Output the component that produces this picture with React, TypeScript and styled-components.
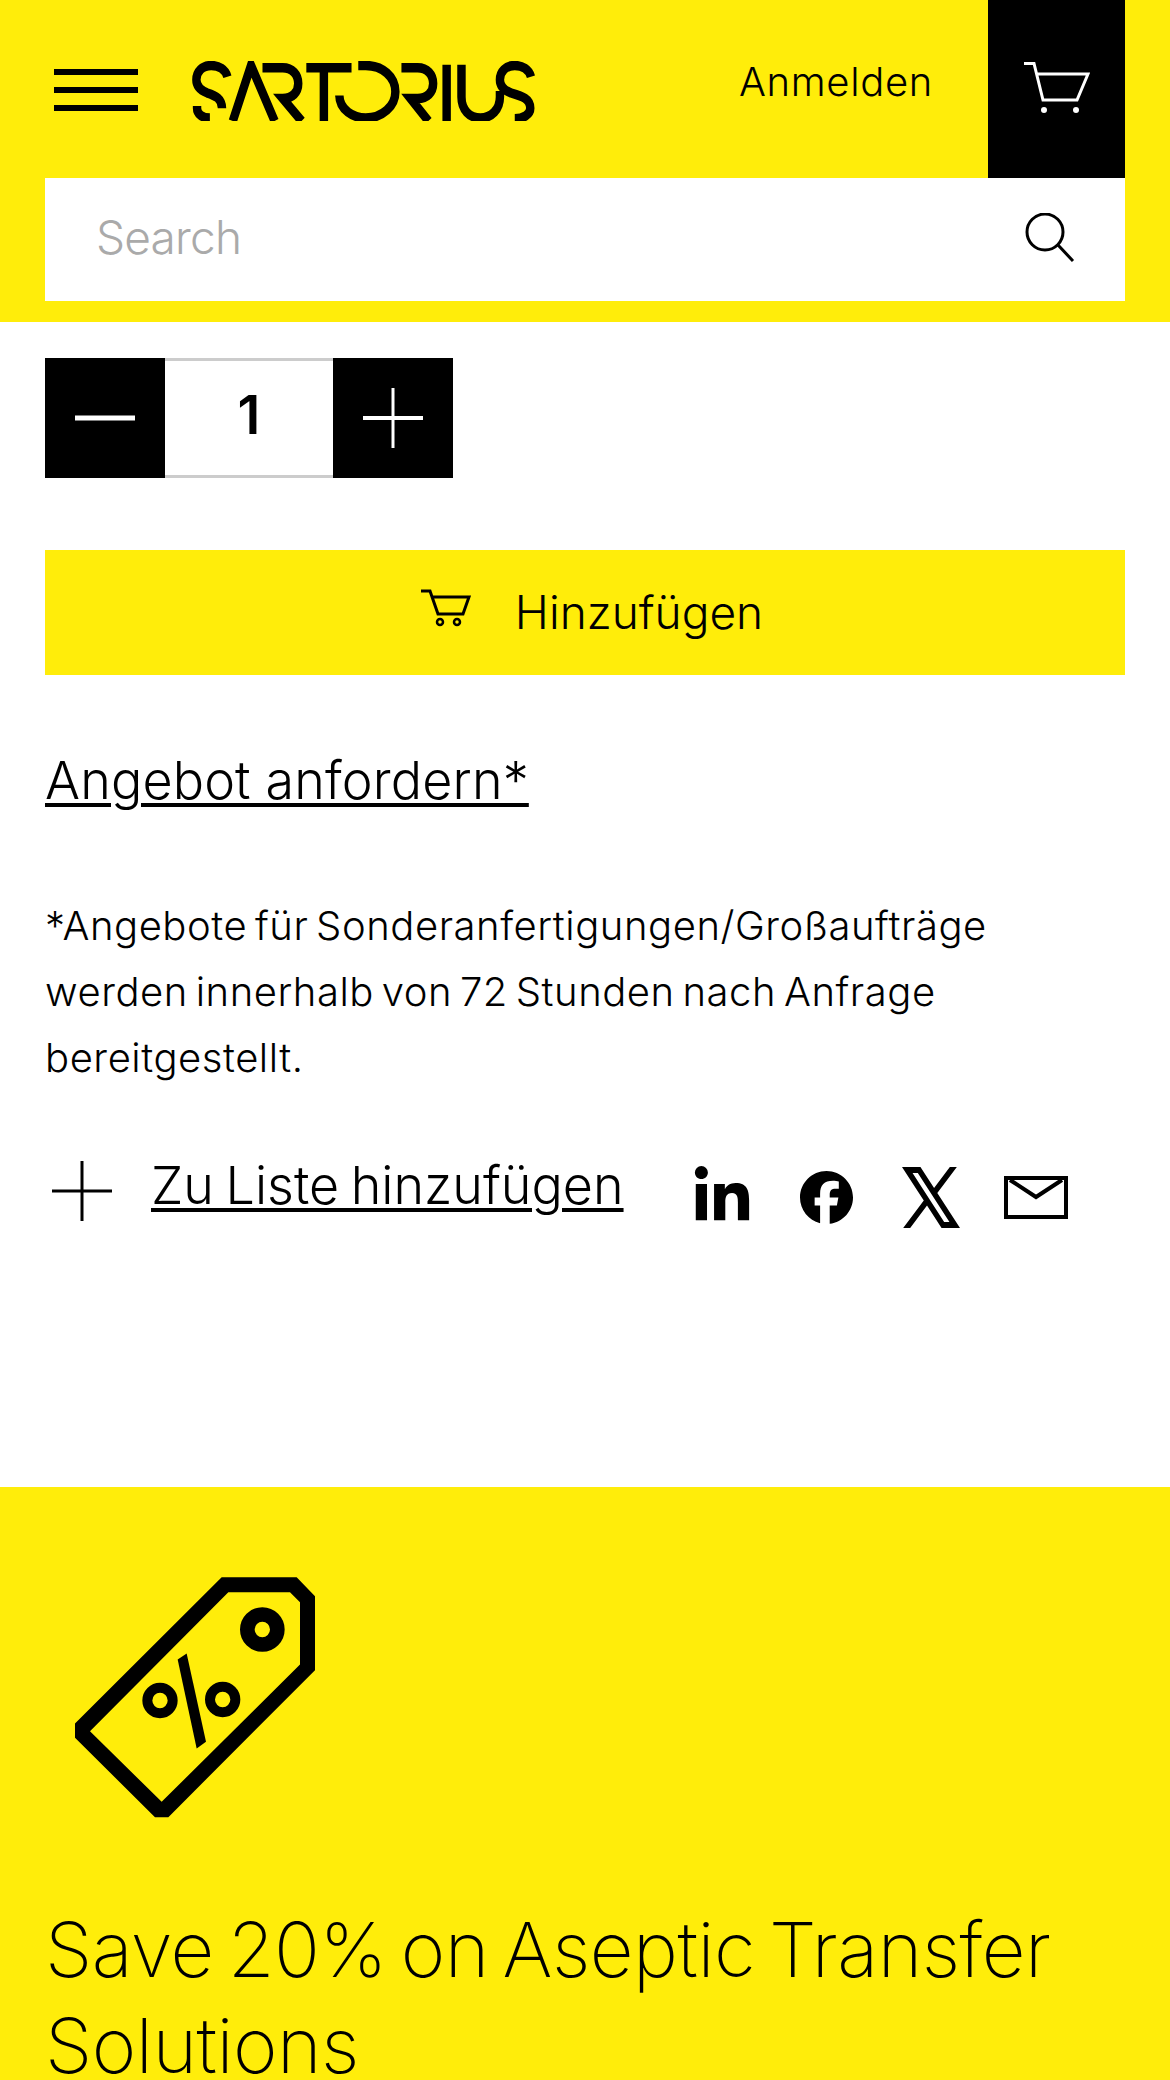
import React from "react";
import styled, { createGlobalStyle } from "styled-components";
import { FaLinkedinIn, FaFacebook } from "react-icons/fa6";

const YELLOW = "#ffed0a";

const Global = createGlobalStyle`
  html, body { margin: 0; padding: 0; background: #fff; }
  body { font-family: "Inter", "Liberation Sans", sans-serif; font-weight: 300; color: #000; }
  * { box-sizing: border-box; }
`;

const Page = styled.div`
  width: 1170px;
  height: 2080px;
  overflow: hidden;
  display: flex;
  flex-direction: column;
`;

const Header = styled.header`
  background: ${YELLOW};
  height: 322px;
  padding: 0 45px;
  flex: none;
`;

const TopRow = styled.div`
  height: 178px;
  display: flex;
  align-items: center;
`;

const Burger = styled.div`
  width: 84px;
  margin-left: 9px;
  margin-top: 2px;
  display: flex;
  flex-direction: column;
  gap: 12px;
  flex: none;
`;

const BurgerBar = styled.span`
  display: block;
  height: 6px;
  background: #000;
`;

const LogoSvg = styled.svg`
  width: 343px;
  height: 60px;
  margin-left: 54px;
  margin-top: 4px;
  flex: none;
`;

const SignIn = styled.a`
  margin-left: auto;
  margin-right: 55px;
  margin-top: -14px;
  font-size: 40px;
  line-height: 48px;
  letter-spacing: 0.66px;
`;

const CartBox = styled.div`
  width: 137px;
  height: 178px;
  background: #000;
  display: flex;
  align-items: center;
  justify-content: center;
  flex: none;
`;

const CartSvg = styled.svg`
  width: 66px;
  height: 52px;
  margin-top: -3px;
`;

const SearchBar = styled.div`
  height: 123px;
  background: #fff;
  display: flex;
  align-items: center;
  padding: 0 50px 0 51px;
`;

const SearchText = styled.span`
  font-size: 46px;
  line-height: 56px;
  color: #aaa;
  letter-spacing: -0.8px;
  margin-top: -5px;
  flex: 1;
`;

const SearchSvg = styled.svg`
  width: 50px;
  height: 50px;
  margin-top: -4px;
`;

const Main = styled.main`
  padding: 36px 45px 0;
  height: 1165px;
  flex: none;
`;

const Stepper = styled.div`
  display: flex;
  width: 408px;
  height: 120px;
`;

const StepButton = styled.div`
  width: 120px;
  background: #000;
  display: flex;
  align-items: center;
  justify-content: center;
  flex: none;
`;

const StepValue = styled.div`
  flex: 1;
  border-top: 3px solid #ccc;
  border-bottom: 3px solid #ccc;
  display: flex;
  align-items: center;
  justify-content: center;
  font-size: 54px;
  font-weight: 600;
  padding-bottom: 8px;
`;

const StepIcon = styled.svg`
  width: 60px;
  height: 60px;
`;

const AddButton = styled.div`
  margin-top: 72px;
  height: 125px;
  background: ${YELLOW};
  display: flex;
  align-items: center;
  justify-content: center;
  gap: 44px;
  padding: 0 0 2px 14px;
  font-size: 46px;
`;

const SmallCart = styled.svg`
  width: 50px;
  height: 38px;
  margin-top: -8px;
`;

const QuoteLink = styled.a`
  display: block;
  margin-top: 74px;
  font-size: 52px;
  line-height: 64px;
  letter-spacing: 0.15px;
  text-decoration: underline;
  text-decoration-thickness: 4px;
  text-underline-offset: 4px;
`;

const Note = styled.p`
  margin: 80px 0 0;
  font-size: 40px;
  line-height: 66px;
  letter-spacing: 0.55px;
  word-spacing: -4px;
`;

const ActionRow = styled.div`
  margin-top: 50px;
  display: flex;
  align-items: center;
  height: 100px;
`;

const ListIcon = styled.svg`
  width: 60px;
  height: 60px;
  margin-left: 7px;
  flex: none;
`;

const ListLink = styled.a`
  margin-left: 39px;
  margin-top: -10px;
  width: 473px;
  font-size: 52px;
  line-height: 64px;
  word-spacing: -3px;
  white-space: nowrap;
  text-decoration: underline;
  text-decoration-thickness: 4px;
  text-underline-offset: 4px;
  flex: none;
`;

const Socials = styled.div`
  display: flex;
  align-items: center;
  margin-left: 70px;
  margin-top: 12px;
  flex: none;
`;

const SocialSlot = styled.span<{ $w: number; $gap: number; $size?: number }>`
  display: flex;
  align-items: center;
  justify-content: center;
  width: ${(p) => p.$w}px;
  margin-right: ${(p) => p.$gap}px;
  font-size: ${(p) => p.$size ?? 53}px;
`;

const XSvg = styled.svg`
  width: 58px;
  height: 61px;
  display: block;
`;

const MailSvg = styled.svg`
  width: 64px;
  height: 43px;
  display: block;
`;

const Promo = styled.section`
  flex: 1;
  background: ${YELLOW};
  padding: 90px 45px 0;
`;

const TagSvg = styled.svg`
  display: block;
  width: 240px;
  height: 241px;
  margin-left: 30px;
`;

const PromoTitle = styled.h2`
  margin: 83px 0 0;
  font-size: 76px;
  line-height: 96px;
  font-weight: 200;
  letter-spacing: -0.5px;
  word-spacing: -7px;
`;

function Logo() {
  return (
    <LogoSvg viewBox="47 30 1017 160" preserveAspectRatio="none" fill="none" stroke="#000" strokeWidth="25">
      <path d="M152 72C146 52 126 42 104 42C78 42 60 58 60 80C60 98 72 108 92 115C116 122 136 130 136 156" />
      <path d="M62 150V156C62 172 78 182 100 182" />
      <path d="M168 190L222 42L292 190" />
      <path d="M256 48H316C344 48 362 66 362 90C362 114 344 130 316 130L372 190" />
      <path d="M386 48H520M438 48V190" />
      <path d="M484 125V122C484 160 526 182 562 182C612 182 650 150 650 112C650 72 612 42 562 42H540" />
      <path d="M668 48H716C744 48 762 66 762 90C762 114 744 130 716 130H695L748 190" />
      <path d="M802 40V190" />
      <path d="M846 40V126C846 160 870 182 902 182C934 182 960 160 960 126V110" />
      <path d="M1052 72C1046 52 1026 42 1004 42C978 42 960 58 960 80C960 98 972 108 992 115C1026 124 1050 130 1050 156C1050 172 1030 184 1004 184" />
    </LogoSvg>
  );
}

function StepGlyph({ plus }: { plus?: boolean }) {
  return (
    <StepIcon viewBox="0 0 60 60" stroke="#fff">
      <line x1="0" y1="30" x2="60" y2="30" strokeWidth={plus ? 4 : 5} />
      {plus && <line x1="30" y1="0" x2="30" y2="60" strokeWidth="3" />}
    </StepIcon>
  );
}

export default function App() {
  return (
    <Page>
      <Global />
      <Header>
        <TopRow>
          <Burger>
            <BurgerBar />
            <BurgerBar />
            <BurgerBar />
          </Burger>
          <Logo />
          <SignIn>Anmelden</SignIn>
          <CartBox>
            <CartSvg viewBox="0 0 66 52" fill="none" stroke="#fff" strokeWidth="3">
              <path d="M0 1.5H10L19 38H53L64 12H13" />
              <circle cx="20" cy="48" r="3" fill="#fff" stroke="none" />
              <circle cx="52" cy="48" r="3" fill="#fff" stroke="none" />
            </CartSvg>
          </CartBox>
        </TopRow>
        <SearchBar>
          <SearchText>Search</SearchText>
          <SearchSvg viewBox="0 0 50 50" fill="none" stroke="#000" strokeWidth="3">
            <circle cx="20" cy="19" r="18" />
            <line x1="33" y1="32" x2="48" y2="48" />
          </SearchSvg>
        </SearchBar>
      </Header>
      <Main>
        <Stepper>
          <StepButton><StepGlyph /></StepButton>
          <StepValue>1</StepValue>
          <StepButton><StepGlyph plus /></StepButton>
        </Stepper>
        <AddButton>
          <SmallCart viewBox="0 0 50 38" fill="none" stroke="#000" strokeWidth="3">
            <path d="M0 2H9L17 25H42L48 8H11" />
            <circle cx="19" cy="33" r="3" strokeWidth="2.5" />
            <circle cx="36" cy="33" r="3" strokeWidth="2.5" />
          </SmallCart>
          <span>Hinzufügen</span>
        </AddButton>
        <QuoteLink>Angebot anfordern*</QuoteLink>
        <Note>
          *Angebote für Sonderanfertigungen/Großaufträge
          <br />
          werden innerhalb von 72 Stunden nach Anfrage
          <br />
          bereitgestellt.
        </Note>
        <ActionRow>
          <ListIcon viewBox="0 0 60 60" stroke="#000" strokeWidth="3">
            <line x1="0" y1="30" x2="60" y2="30" />
            <line x1="30" y1="0" x2="30" y2="60" />
          </ListIcon>
          <ListLink>Zu Liste hinzufügen</ListLink>
          <Socials>
            <SocialSlot $w={56} $gap={50} $size={62}><FaLinkedinIn /></SocialSlot>
            <SocialSlot $w={53} $gap={49}><FaFacebook /></SocialSlot>
            <SocialSlot $w={58} $gap={44}>
              <XSvg viewBox="1 2 22 20" preserveAspectRatio="none">
                <path d="M8 2H1L9.26086 13.0145L1.44995 21.9999H4.09998L10.4883 14.651L16 22H23L14.3917 10.5223L21.8001 2H19.1501L13.1643 8.88578L8 2ZM17 20L5 4H7L19 20H17Z" />
              </XSvg>
            </SocialSlot>
            <SocialSlot $w={64} $gap={0}>
              <MailSvg viewBox="0 0 64 43" fill="none" stroke="#000" strokeWidth="4">
                <rect x="2" y="2" width="60" height="39" />
                <path d="M6 4L32 21L58 4" />
              </MailSvg>
            </SocialSlot>
          </Socials>
        </ActionRow>
      </Main>
      <Promo>
        <TagSvg viewBox="105 83 720 722">
          <path
            fillRule="evenodd"
            d="M545 83H770L825 140V362L385 803H345L105 565V522ZM565 128L150 545L365 757L780 345V158L750 128Z"
          />
          <circle cx="667" cy="240" r="45" fill="none" stroke="#000" strokeWidth="44" />
          <circle cx="360" cy="453" r="38" fill="none" stroke="#000" strokeWidth="30" />
          <circle cx="548" cy="450" r="38" fill="none" stroke="#000" strokeWidth="30" />
          <path d="M440 312L413 330L470 597L498 577Z" />
        </TagSvg>
        <PromoTitle>
          Save 20% on Aseptic Transfer
          <br />
          Solutions
        </PromoTitle>
      </Promo>
    </Page>
  );
}
